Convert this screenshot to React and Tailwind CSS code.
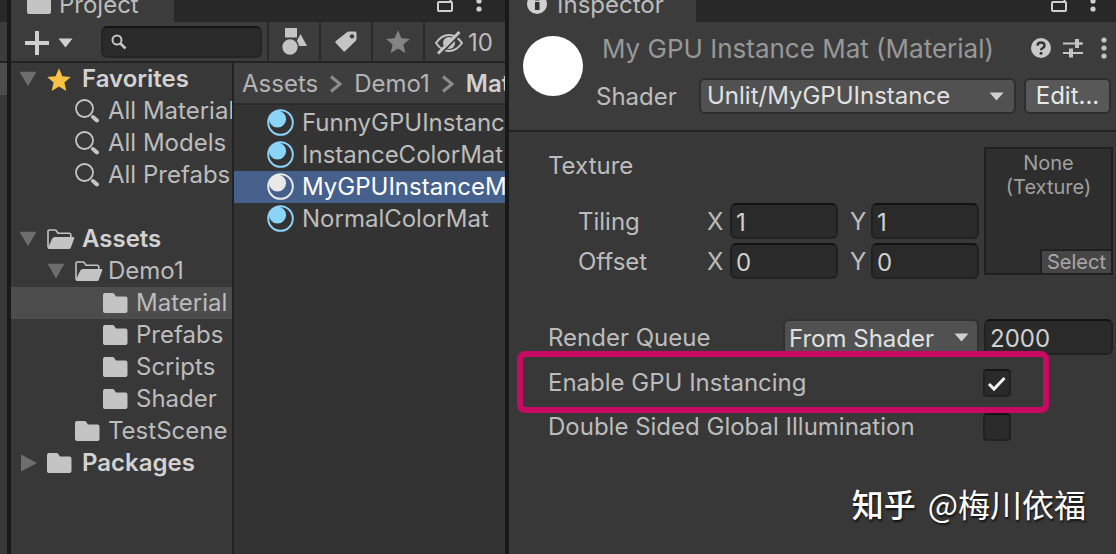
import { useState } from "react";

const FONT = "font-['Inter','Noto_Sans_CJK_SC',sans-serif]";

function Caret({ className }) {
  return (
    <svg viewBox="0 0 16 10" preserveAspectRatio="none" className={className} fill="currentColor" aria-hidden="true">
      <path d="M0.5 0.5h15L8 9.5z" />
    </svg>
  );
}

function Dots({ className }) {
  return (
    <svg viewBox="0 0 6 22" className={className} fill="currentColor" aria-hidden="true">
      <circle cx="3" cy="3" r="2.6" />
      <circle cx="3" cy="11" r="2.6" />
      <circle cx="3" cy="19" r="2.6" />
    </svg>
  );
}

function Lock({ className }) {
  return (
    <svg viewBox="0 0 17 20" className={className} fill="none" stroke="currentColor" strokeWidth="2" aria-hidden="true">
      <rect x="1" y="10" width="14" height="9" rx="1" />
      <path d="M13.500 10V4a4 4 0 0 0-8 0" />
    </svg>
  );
}

function Folder({ className }) {
  return (
    <svg viewBox="0 0 25 20" className={className} fill="currentColor" aria-hidden="true">
      <path d="M2 0h7.5q1 0 1.600.8L13 3.600h9.500q2 0 2 2V18q0 2-2 2H2q-2 0-2-2V2q0-2 2-2z" />
    </svg>
  );
}

function FolderOpen({ className }) {
  return (
    <svg viewBox="0 0 28 20" className={className} fill="currentColor" aria-hidden="true">
      <path d="M1 18.500V2.200Q1 1 2.200 1H8q.8 0 1.300.7L11 4.300h11q1.800 0 1.800 1.700v2" fill="none" stroke="currentColor" strokeWidth="1.600" />
      <path d="M8 8h18.200q1.500 0 1 1.400l-3.300 9Q23.300 20 22 20H2Q.5 20 1 18.600L5 10q1-2 3-2z" />
    </svg>
  );
}

function BigSearch({ className }) {
  return (
    <svg viewBox="0 0 25 24" className={className} fill="none" stroke="currentColor" aria-hidden="true">
      <circle cx="9.500" cy="9.500" r="8.500" strokeWidth="1.800" />
      <path d="M18 18l4 3.500" strokeWidth="4" strokeLinecap="round" />
    </svg>
  );
}

function Star({ className }) {
  return (
    <svg viewBox="0 0 24 23" className={className} fill="currentColor" aria-hidden="true">
      <path d="M12 0.300l3.400 7.900 8.400.8-6.400 5.600 1.900 8.300L12 18.500l-7.300 4.400 1.900-8.300L.2 9l8.400-.8z" />
    </svg>
  );
}

function MaterialIcon({ selected }) {
  return (
    <svg viewBox="0 0 27 27" className={"mb-0.5 size-[27px] shrink-0 " + (selected ? "text-[#e8e8e8]" : "text-[#8cd3fa]")} aria-hidden="true">
      <circle cx="13.500" cy="13.500" r="12.300" fill="none" stroke="currentColor" strokeWidth="2" />
      <circle cx="10.500" cy="10" r="8.600" fill="currentColor" />
    </svg>
  );
}

const TREE = [
  { name: "Favorites", depth: 0, icon: "star", open: true },
  { name: "All Materials", depth: 1, icon: "search" },
  { name: "All Models", depth: 1, icon: "search" },
  { name: "All Prefabs", depth: 1, icon: "search" },
  { name: "Assets", depth: 0, icon: "open", open: true, spaced: true },
  { name: "Demo1", depth: 1, icon: "open", open: true },
  { name: "Material", depth: 2, icon: "folder" },
  { name: "Prefabs", depth: 2, icon: "folder" },
  { name: "Scripts", depth: 2, icon: "folder" },
  { name: "Shader", depth: 2, icon: "folder" },
  { name: "TestScene", depth: 1, icon: "folder" },
  { name: "Packages", depth: 0, icon: "folder", open: false },
];

const INDENT = ["pl-2", "pl-9", "pl-16"];
const ICONS = {
  star: <Star className="h-[23px] w-6 text-[#f7c143]" />,
  search: <BigSearch className="h-6 w-[25px]" />,
  open: <FolderOpen className="h-5 w-7" />,
  folder: <Folder className="h-5 w-[25px]" />,
};

function TreeRow({ item, selected, onSelect }) {
  return (
    <li className={item.spaced ? "mt-8" : ""}>
      <button
        type="button"
        onClick={onSelect}
        className={
          "flex h-8 w-full items-center overflow-hidden text-left whitespace-nowrap " +
          INDENT[item.depth] +
          (selected ? " bg-[#4d4d4d]" : "") +
          (item.depth === 0 ? " font-semibold text-[#d2d2d2]" : "")
        }
      >
        <span className="flex w-7 shrink-0 items-center text-[#6e6e6e]">
          {item.open === true && <Caret className="h-4 w-[18px]" />}
          {item.open === false && (
            <svg viewBox="0 0 16 18" className="ml-0.5 h-[18px] w-4" fill="currentColor" aria-hidden="true">
              <path d="M0 0.500l16 8.500-16 8.500z" />
            </svg>
          )}
        </span>
        <span className={"flex shrink-0 items-center text-[#c4c4c4] " + (item.depth === 0 ? "w-[35px]" : "w-[33px]")}>
          {ICONS[item.icon]}
        </span>
        {item.name}
      </button>
    </li>
  );
}

const MATERIALS = ["FunnyGPUInstanceMat", "InstanceColorMat", "MyGPUInstanceMat", "NormalColorMat"];

const TOOL = "flex w-[52px] shrink-0 items-center justify-center border-l-2 border-[#2a2a2a]";

function ProjectPanel() {
  const [folder, setFolder] = useState("Material");
  const [asset, setAsset] = useState("MyGPUInstanceMat");
  return (
    <section className="flex w-[494px] shrink-0 flex-col overflow-hidden bg-[#383838]">
      <header className="flex h-[22px] items-end justify-between overflow-hidden bg-[#282828]">
        <h2 className="flex w-[163px] items-end bg-[#3c3c3c] pb-px pl-4 leading-8">
          <span className="mr-2 mb-[7px] h-5 w-6 shrink-0 rounded-xs bg-[#c4c4c4]" />
          Project
        </h2>
        <div className="flex items-end gap-[22px] pr-[23px] pb-2.5 text-[#d0d0d0]">
          <Lock className="h-5 w-[17px]" />
          <Dots className="h-[22px] w-1.5" />
        </div>
      </header>

      <div className="flex h-[41px] items-stretch border-b-2 border-[#232323] bg-[#3c3c3c]">
        <button type="button" aria-label="Create asset" className="flex shrink-0 items-center gap-[9px] pt-0.5 pl-3.5 text-[#d0d0d0]">
          <svg viewBox="0 0 24 24" className="size-6" stroke="currentColor" strokeWidth="4" aria-hidden="true">
            <path d="M12 0v24M0 12h24" />
          </svg>
          <Caret className="h-2.5 w-[15px]" />
        </button>
        <label className="mt-px mr-[5px] ml-7 flex flex-1 items-center self-center rounded-md border-2 border-[#242424] border-t-[#141414] bg-[#2a2a2a] pl-2">
          <svg viewBox="0 0 16 16" className="size-4 shrink-0 text-[#c4c4c4]" fill="none" stroke="currentColor" aria-hidden="true">
            <circle cx="6" cy="6" r="4.500" strokeWidth="2" />
            <path d="M9.500 9.500l5 5" strokeWidth="2.600" />
          </svg>
          <input type="search" aria-label="Search assets" className="h-7 w-full min-w-0 bg-transparent px-2 text-xl outline-none" />
        </label>
        <button type="button" aria-label="Search by type" className={TOOL}>
          <svg viewBox="0 0 25 27" className="h-[27px] w-[25px]" fill="#c4c4c4" aria-hidden="true">
            <path d="M3 0h12v9.500H3z" />
            <path d="M18.500 6l6.500 12h-9l-2-3.500z" />
            <circle cx="8" cy="19" r="8.400" stroke="#3c3c3c" strokeWidth="1.500" />
          </svg>
        </button>
        <button type="button" aria-label="Search by label" className={TOOL}>
          <svg viewBox="0 0 22 21" className="h-[21px] w-[22px]" fill="#c4c4c4" aria-hidden="true">
            <path fillRule="evenodd" d="M12 1.200Q12.800.5 14 .5H20q1.500 0 1.500 1.500v6q0 1-.7 1.700L10.300 20q-1 1-2 0L.8 12q-1-1 0-2zM17 3.200a2.200 2.200 0 1 0 .01 0z" />
          </svg>
        </button>
        <button type="button" aria-label="Save search" className={TOOL}>
          <Star className="h-[23px] w-6 text-[#848484]" />
        </button>
        <button type="button" aria-label="Hidden packages" className="flex w-[82px] shrink-0 items-center gap-[5px] border-l-2 border-[#2a2a2a] pt-0.5 pl-2.5">
          <svg viewBox="0 0 28 24" className="h-6 w-7 shrink-0" fill="none" stroke="#c4c4c4" strokeWidth="2" aria-hidden="true">
            <path d="M1 12q5.500-8 13-8t13 8q-5.500 8-13 8T1 12z" />
            <circle cx="14" cy="12" r="6" fill="#c4c4c4" stroke="none" />
            <path d="M5 23.500L26.500 2" stroke="#3c3c3c" strokeWidth="2" />
            <path d="M3 22.500L24.500 1" strokeWidth="3" />
          </svg>
          10
        </button>
      </div>

      <div className="flex flex-1">
        <nav aria-label="Folders" className="w-[221px] shrink-0">
          <ul>
            {TREE.map((item) => (
              <TreeRow key={item.name} item={item} selected={item.name === folder} onSelect={() => setFolder(item.name)} />
            ))}
          </ul>
        </nav>
        <div className="min-w-0 flex-1 border-l-2 border-[#222222] bg-[#333333]">
          <nav aria-label="Breadcrumb" className="flex h-[42px] items-center gap-3 overflow-hidden border-b-2 border-[#2a2a2a] bg-[#3e3e3e] pt-0.5 pl-2 whitespace-nowrap text-[#b4b4b4]">
            <a href="#assets">Assets</a>
            <svg viewBox="0 0 12 18" className="h-[18px] w-3 shrink-0" fill="none" stroke="#8c8c8c" strokeWidth="3" aria-hidden="true">
              <path d="M1 1.500l9 7.500-9 7.500" />
            </svg>
            <a href="#demo1">Demo1</a>
            <svg viewBox="0 0 12 18" className="h-[18px] w-3 shrink-0" fill="none" stroke="#8c8c8c" strokeWidth="3" aria-hidden="true">
              <path d="M1 1.500l9 7.500-9 7.500" />
            </svg>
            <a href="#material" className="font-semibold text-[#d0d0d0]">Material</a>
          </nav>
          <ul className="pt-0.5">
            {MATERIALS.map((name) => (
              <li key={name}>
                <button
                  type="button"
                  onClick={() => setAsset(name)}
                  className={
                    "flex h-8 w-full items-center gap-2 overflow-hidden pl-[33px] text-left whitespace-nowrap " +
                    (name === asset ? "bg-[#46608c] text-white" : "")
                  }
                >
                  <MaterialIcon selected={name === asset} />
                  {name}
                </button>
              </li>
            ))}
          </ul>
        </div>
      </div>
    </section>
  );
}

const FIELD =
  "h-9 rounded-md border-2 border-[#212121] border-t-[#121212] bg-[#2a2a2a] text-[#d0d0d0] outline-none";

function VectorRow({ label, x, y }) {
  return (
    <div role="group" aria-label={label} className="flex h-9 items-center pl-[30px]">
      <span className="flex-1 pt-0.5">{label}</span>
      <label className="flex items-center">
        <span className="w-[23px] pt-0.5">X</span>
        <input type="text" defaultValue={x} className={"w-[108px] px-1 pt-0.5 " + FIELD} />
      </label>
      <label className="ml-3 flex items-center">
        <span className="w-[21px] pt-0.5">Y</span>
        <input type="text" defaultValue={y} className={"w-[108px] px-1 pt-0.5 " + FIELD} />
      </label>
    </div>
  );
}

function CheckRow({ id, label, checked, children, className }) {
  const [on, setOn] = useState(checked);
  return (
    <div className={"relative flex h-7 items-center " + className}>
      <label htmlFor={id} className="flex-1">{label}</label>
      <span className="relative mr-[102px] size-7">
        <input
          id={id}
          type="checkbox"
          checked={on}
          onChange={() => setOn(!on)}
          className="block size-7 appearance-none rounded border-2 border-[#212121] border-t-[#151515] bg-[#2a2a2a]"
        />
        {on && (
          <svg viewBox="0 0 28 28" className="pointer-events-none absolute inset-0 size-7" fill="none" stroke="#f2f2f2" strokeWidth="3" aria-hidden="true">
            <path d="M6 15l5 5L21.500 9" />
          </svg>
        )}
      </span>
      {children}
    </div>
  );
}

function InspectorPanel() {
  return (
    <section className="min-w-0 flex-1 bg-[#383838]">
      <header className="flex h-[22px] items-end justify-between overflow-hidden bg-[#282828]">
        <h2 className="flex w-[187px] items-end bg-[#3c3c3c] pb-px pl-[18px] leading-8">
          <svg viewBox="0 0 20 20" className="mr-2.5 mb-[7px] size-5 shrink-0" aria-hidden="true">
            <circle cx="10" cy="10" r="10" fill="#d0d0d0" />
            <path d="M8 8h4.500v8H8zM8 3.500h4.500v3H8z" fill="#303030" />
          </svg>
          Inspector
        </h2>
        <div className="flex items-end gap-[22px] pr-5 pb-2.5 text-[#d0d0d0]">
          <Lock className="h-5 w-[17px]" />
          <Dots className="h-[22px] w-1.5" />
        </div>
      </header>

      <div className="flex h-[110px] gap-[13px] border-b-2 border-[#232323] bg-[#3c3c3c] pt-2 pr-[5px] pl-3.5">
        <div className="mt-1.5 size-[60px] shrink-0 rounded-full bg-white" />
        <div className="min-w-0 flex-1">
          <div className="flex h-9 items-center pl-1.5 text-[#c4c4c4]">
            <h1 className="flex-1 truncate pt-0.5 text-[26px] text-[#989898]">My GPU Instance Mat (Material)</h1>
            <button type="button" aria-label="Help">
              <svg viewBox="0 0 20 20" className="size-5" aria-hidden="true">
                <circle cx="10" cy="10" r="10" fill="#c8c8c8" />
                <path d="M6.500 7.800Q6.600 4.500 10 4.500t3.500 3q0 1.600-1.800 2.500Q10 10.900 10 12.300" fill="none" stroke="#333333" strokeWidth="2.400" />
                <circle cx="10" cy="15.300" r="1.500" fill="#333333" />
              </svg>
            </button>
            <button type="button" aria-label="Presets" className="ml-3">
              <svg viewBox="0 0 20 20" className="size-5" fill="none" stroke="currentColor" aria-hidden="true">
                <path d="M0 5.500h11M16 5.500h4M0 15h5M10 15h10" strokeWidth="2" />
                <path d="M14 1v9M8 10.500v9" strokeWidth="4" />
                <path d="M11 5.500h8M3 15h8" strokeWidth="2" />
              </svg>
            </button>
            <button type="button" aria-label="More" className="mr-1 ml-[18px]">
              <Dots className="h-[22px] w-1.5" />
            </button>
          </div>
          <div className="mt-3 flex h-9 items-center">
            <label htmlFor="shader" className="w-[103px] shrink-0 pt-0.5">Shader</label>
            <span className="relative min-w-0 flex-1">
              <select id="shader" className="block h-9 w-full appearance-none rounded-md border-2 border-[#2e2e2e] bg-[#515151] px-1.5 text-[#e0e0e0] outline-none">
                <option>Unlit/MyGPUInstance</option>
              </select>
              <Caret className="pointer-events-none absolute top-3.5 right-3 h-[9px] w-[15px] text-[#d0d0d0]" />
            </span>
            <button type="button" className="ml-2 h-9 w-[87px] shrink-0 rounded-md border-2 border-[#2e2e2e] bg-[#585858] text-[#e8e8e8]">
              Edit...
            </button>
          </div>
        </div>
      </div>

      <div className="pt-[15px] pr-[3px] pl-[39px]">
        <div className="flex items-start gap-[5px]">
          <div className="flex-1">
            <p className="h-9 pt-px leading-9">Texture</p>
            <div className="mt-5 flex flex-col gap-1">
              <VectorRow label="Tiling" x="1" y="1" />
              <VectorRow label="Offset" x="0" y="0" />
            </div>
          </div>
          <div className="flex h-32 w-[129px] shrink-0 flex-col items-end justify-between border-2 border-[#202020] bg-[#2e2e2e]">
            <p className="w-full pt-0.5 text-center text-xl leading-6 text-[#a0a0a0]">
              None
              <br />
              (Texture)
            </p>
            <button type="button" className="h-6 border-t-2 border-l-2 border-[#202020] bg-[#464646] px-[5px] text-xl leading-5 text-[#a8a8a8]">
              Select
            </button>
          </div>
        </div>

        <div className="mt-10 flex h-9 items-center">
          <label htmlFor="queue" className="flex-1 pt-0.5">Render Queue</label>
          <span className="relative w-[196px]">
            <select id="queue" className="block h-9 w-full appearance-none rounded-md border-2 border-[#303030] bg-[#515151] px-1 pt-0.5 text-[#e0e0e0] outline-none">
              <option>From Shader</option>
            </select>
            <Caret className="pointer-events-none absolute top-3.5 right-2.5 h-[9px] w-[15px] text-[#d0d0d0]" />
          </span>
          <input type="text" aria-label="Render queue value" defaultValue="2000" className={"ml-[5px] w-[129px] px-1 pt-0.5 " + FIELD} />
        </div>

        <CheckRow id="instancing" label="Enable GPU Instancing" checked className="mt-3.5">
          <span className="pointer-events-none absolute -top-[18px] right-16 -left-[31px] h-[62px] rounded-lg border-[6px] border-[#c70a62]" />
        </CheckRow>
        <CheckRow id="doublesided" label="Double Sided Global Illumination" checked={false} className="mt-4" />
      </div>
    </section>
  );
}

export default function App() {
  return (
    <main className={"relative flex min-h-screen overflow-hidden bg-[#191919] text-2xl leading-8 text-[#bcbcbc] " + FONT}>
      <div className="mr-1 w-[7px] shrink-0 bg-[#383838]">
        <div className="h-[22px] bg-[#282828]" />
        <div className="h-[41px] border-b-2 border-[#232323] bg-[#3c3c3c]" />
        <div className="h-8 bg-[#4d4d4d]" />
      </div>
      <ProjectPanel />
      <div className="w-1 shrink-0" />
      <InspectorPanel />
      <p className="absolute right-[30px] bottom-[27px] flex items-center gap-3 font-['Noto_Sans_CJK_SC',sans-serif] text-[32px] leading-12 text-white [text-shadow:1px_2px_2px_#111111]">
        <span className="font-medium">知乎</span>
        <span>@梅川依福</span>
      </p>
    </main>
  );
}
